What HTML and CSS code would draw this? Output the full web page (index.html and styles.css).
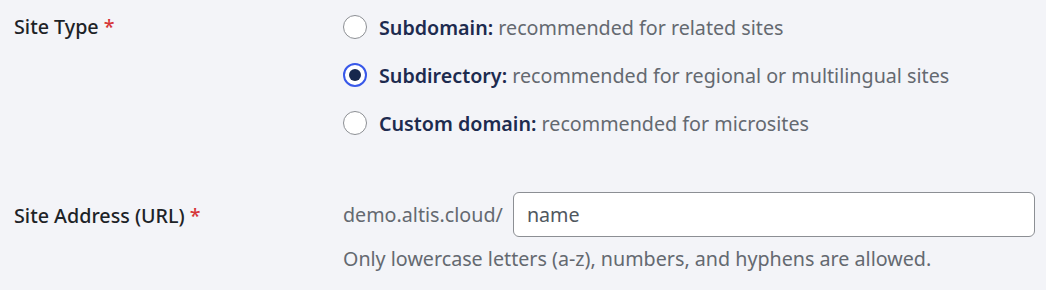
FILE: index.html
```html
<!DOCTYPE html>
<html>
<head>
<meta charset="utf-8">
<link rel="stylesheet" href="styles.css">
</head>
<body>
<form class="form">
  <div class="row row-type">
    <div class="label">Site Type <span class="req">*</span></div>
    <div class="field">
      <label class="option"><span class="radio"></span><span class="opt-text"><b>Subdomain:</b> recommended for related sites</span></label>
      <label class="option"><span class="radio checked"></span><span class="opt-text"><b>Subdirectory:</b> recommended for regional or multilingual sites</span></label>
      <label class="option"><span class="radio"></span><span class="opt-text"><b>Custom domain:</b> recommended for microsites</span></label>
    </div>
  </div>
  <div class="row row-url">
    <div class="label url-label">Site Address (URL) <span class="req">*</span></div>
    <div class="field">
      <div class="url-line">
        <span class="prefix">demo.altis.cloud/</span>
        <div class="input">name</div>
      </div>
      <p class="help">Only lowercase letters (a-z), numbers, and hyphens are allowed.</p>
    </div>
  </div>
</form>
</body>
</html>
```
FILE: styles.css
```css
html, body {
  margin: 0;
  padding: 0;
  background: #f3f4f8;
}
body {
  font-family: "Noto Sans", "Open Sans", sans-serif;
  font-size: 19.7px;
  color: #1d2327;
  width: 1046px;
  height: 290px;
  overflow: hidden;
}
.form {
  padding: 0 11px 0 14px;
}
.row {
  display: grid;
  grid-template-columns: 329px 1fr;
}
.label {
  font-weight: 500;
  color: #1d2327;
  line-height: 26px;
}
.row-type .label {
  padding-top: 14px;
}
.req {
  color: #d63638;
}
.field {
  display: flex;
  flex-direction: column;
}
.row-type .field {
  padding-top: 15px;
  gap: 24px;
}
.option {
  display: flex;
  align-items: center;
  gap: 12px;
  height: 24px;
}
.radio {
  width: 24px;
  height: 24px;
  box-sizing: border-box;
  border: 1px solid #8c8f94;
  border-radius: 50%;
  background: #fff;
  display: flex;
  align-items: center;
  justify-content: center;
  flex: none;
}
.radio.checked {
  border: 2px solid #3858e9;
}
.radio.checked::after {
  content: "";
  width: 12px;
  height: 12px;
  border-radius: 50%;
  background: #17284d;
}
.opt-text {
  color: #646970;
  white-space: nowrap;
}
.opt-text b {
  color: #1d2b4f;
  font-weight: 600;
}
.row-url {
  margin-top: 57px;
}
.url-label {
  padding-top: 11px;
}
.url-line {
  display: flex;
  align-items: center;
  gap: 10px;
}
.prefix {
  color: #646970;
  white-space: nowrap;
}
.input {
  flex: 1;
  height: 45px;
  box-sizing: border-box;
  border: 1px solid #8c8f94;
  border-radius: 6px;
  background: #fff;
  padding: 0 13px;
  display: flex;
  align-items: center;
  color: #50575e;
}
.help {
  margin: 9px 0 0;
  color: #646970;
  line-height: 26px;
}
```
